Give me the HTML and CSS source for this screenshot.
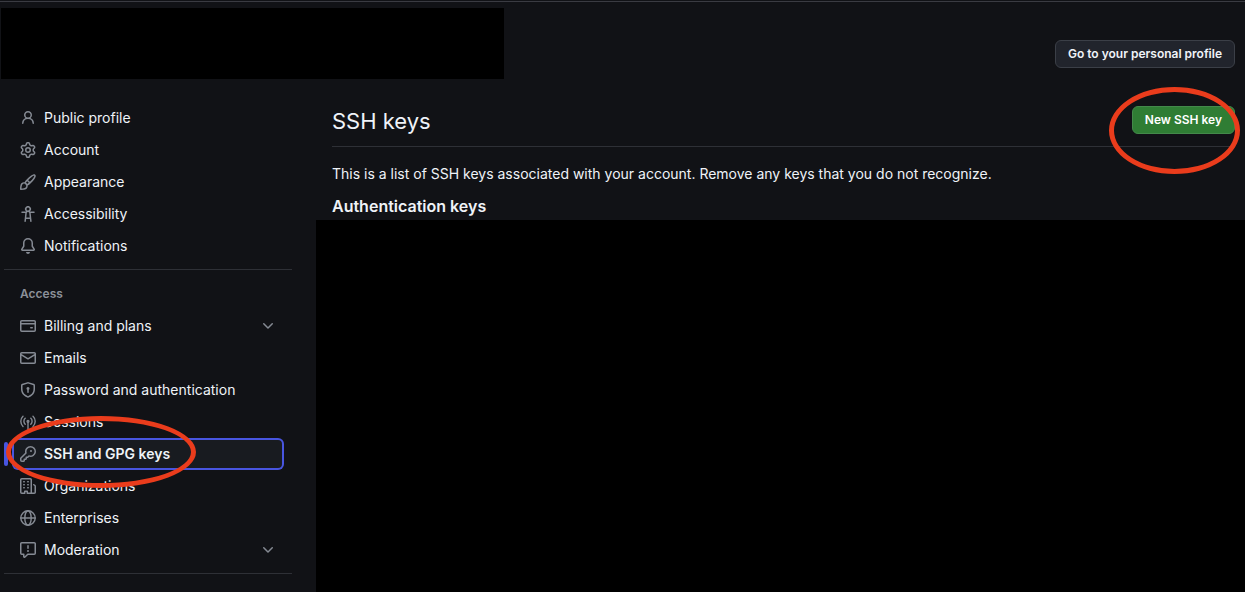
FILE: index.html
```html
<!DOCTYPE html>
<html lang="en">
<head>
  <meta charset="UTF-8" />
  <meta name="viewport" content="width=device-width, initial-scale=1" />
  <title>SSH and GPG keys</title>
  <link rel="stylesheet" href="styles.css">
</head>
<body>

  <header class="profile-header">
    <div class="profile-cover"></div>
    <button type="button" class="btn">Go to your personal profile</button>
  </header>

  <div class="layout">
    <nav class="sidebar" aria-label="Settings">
      <ul class="nav-list">
        <li><a href="#profile"><svg class="icon" viewBox="0 0 16 16"><path d="M10.561 8.073a6.005 6.005 0 0 1 3.432 5.142.75.75 0 1 1-1.498.07 4.5 4.5 0 0 0-8.99 0 .75.75 0 0 1-1.498-.07 6.004 6.004 0 0 1 3.431-5.142 3.999 3.999 0 1 1 5.123 0ZM10.5 5a2.5 2.5 0 1 0-5 0 2.5 2.5 0 0 0 5 0Z"/></svg>Public profile</a></li>
        <li><a href="#account"><svg class="icon" viewBox="0 0 16 16"><path d="M8 0a8.2 8.2 0 0 1 .701.031C9.444.095 9.99.645 10.16 1.29l.288 1.107c.018.066.079.158.212.224.231.114.454.243.668.386.123.082.233.09.299.071l1.103-.303c.644-.176 1.392.021 1.82.63.27.385.506.792.704 1.218.315.675.111 1.422-.364 1.891l-.814.806c-.049.048-.098.147-.088.294.016.257.016.515 0 .772-.01.147.038.246.088.294l.814.806c.475.469.679 1.216.364 1.891a7.977 7.977 0 0 1-.704 1.217c-.428.61-1.176.807-1.82.63l-1.102-.302c-.067-.019-.177-.011-.3.071a5.909 5.909 0 0 1-.668.386c-.133.066-.194.158-.211.224l-.29 1.106c-.168.646-.715 1.196-1.458 1.26a8.006 8.006 0 0 1-1.402 0c-.743-.064-1.289-.614-1.458-1.26l-.289-1.106c-.018-.066-.079-.158-.212-.224a5.738 5.738 0 0 1-.668-.386c-.123-.082-.233-.09-.299-.071l-1.103.303c-.644.176-1.392-.021-1.82-.63a8.12 8.12 0 0 1-.704-1.218c-.315-.675-.111-1.422.363-1.891l.815-.806c.05-.048.098-.147.088-.294a6.214 6.214 0 0 1 0-.772c.01-.147-.038-.246-.088-.294l-.815-.806C.635 6.045.431 5.298.746 4.623a7.92 7.92 0 0 1 .704-1.217c.428-.61 1.176-.807 1.82-.63l1.102.302c.067.019.177.011.3-.071.214-.143.437-.272.668-.386.133-.066.194-.158.211-.224l.29-1.106C6.009.645 6.556.095 7.299.03 7.53.01 7.764 0 8 0Zm-.571 1.525c-.036.003-.108.036-.137.146l-.289 1.105c-.147.561-.549.967-.998 1.189-.173.086-.34.183-.5.29-.417.278-.97.423-1.529.27l-1.103-.303c-.109-.03-.175.016-.195.045-.22.312-.412.644-.573.99-.014.031-.021.11.059.19l.815.806c.411.406.562.957.53 1.456a4.709 4.709 0 0 0 0 .582c.032.499-.119 1.05-.53 1.456l-.815.806c-.081.08-.073.159-.059.19.162.346.353.677.573.989.02.03.085.076.195.046l1.102-.303c.56-.153 1.113-.008 1.53.27.161.107.328.204.501.29.447.222.85.629.997 1.189l.289 1.105c.029.109.101.143.137.146a6.6 6.6 0 0 0 1.142 0c.036-.003.108-.036.137-.146l.289-1.105c.147-.561.549-.967.998-1.189.173-.086.34-.183.5-.29.417-.278.97-.423 1.529-.27l1.103.303c.109.029.175-.016.195-.045.22-.313.411-.644.573-.99.014-.031.021-.11-.059-.19l-.815-.806c-.411-.406-.562-.957-.53-1.456a4.709 4.709 0 0 0 0-.582c-.032-.499.119-1.05.53-1.456l.815-.806c.081-.08.073-.159.059-.19a6.464 6.464 0 0 0-.573-.989c-.02-.03-.085-.076-.195-.046l-1.102.303c-.56.153-1.113.008-1.53-.27a4.44 4.44 0 0 0-.501-.29c-.447-.222-.85-.629-.997-1.189l-.289-1.105c-.029-.11-.101-.143-.137-.146a6.6 6.6 0 0 0-1.142 0ZM11 8a3 3 0 1 1-6 0 3 3 0 0 1 6 0ZM9.5 8a1.5 1.5 0 1 0-3.001.001A1.5 1.5 0 0 0 9.5 8Z"/></svg>Account</a></li>
        <li><a href="#appearance"><svg class="icon" viewBox="0 0 16 16"><path d="M11.134 1.535c.7-.509 1.416-.942 2.076-1.155.649-.21 1.463-.267 2.069.34.603.601.568 1.411.368 2.07-.202.668-.624 1.39-1.125 2.096-1.011 1.424-2.496 2.987-3.775 4.249-1.098 1.084-2.132 1.839-3.04 2.3a3.744 3.744 0 0 1-1.055 3.217c-.431.431-1.065.691-1.657.861-.614.177-1.294.287-1.914.357A21.151 21.151 0 0 1 .797 16H.743a.75.75 0 0 1-.743-.742v-.054a21.25 21.25 0 0 1 .13-2.284c.067-.647.187-1.287.358-1.914.17-.591.43-1.226.86-1.657a3.746 3.746 0 0 1 3.227-1.054c.466-.893 1.225-1.907 2.314-2.982 1.271-1.255 2.833-2.75 4.245-3.777ZM1.62 13.089c-.051.464-.086.929-.104 1.395.466-.018.932-.053 1.396-.104a10.511 10.511 0 0 0 1.668-.309c.526-.151.856-.325 1.011-.48a2.25 2.25 0 1 0-3.182-3.182c-.155.155-.329.485-.48 1.01a10.515 10.515 0 0 0-.309 1.67Zm10.396-10.34c-1.224.89-2.605 2.189-3.822 3.384l1.718 1.718c1.21-1.205 2.51-2.597 3.387-3.833.47-.662.78-1.227.912-1.662.134-.444.032-.551.009-.575h-.001V1.78c-.014-.014-.113-.113-.548.027-.432.14-.995.462-1.655.942Zm-4.832 7.266-.001.001a9.859 9.859 0 0 0 1.63-1.142L7.155 7.216a9.7 9.7 0 0 0-1.161 1.607c.482.302.889.71 1.19 1.192Z"/></svg>Appearance</a></li>
        <li><a href="#accessibility"><svg class="icon" viewBox="0 0 16 16"><path d="M9.923 5.302c.063.063.122.129.178.198H14A.75.75 0 0 1 14 7h-3.3l.578 5.163.362 2.997a.75.75 0 0 1-1.49.18L9.868 13H6.132l-.282 2.34a.75.75 0 0 1-1.49-.18l.362-2.997L5.3 7H2a.75.75 0 0 1 0-1.5h3.9a2.54 2.54 0 0 1 .176-.198 3 3 0 1 1 3.847 0ZM9.2 7.073h-.001a1.206 1.206 0 0 0-2.398 0L6.305 11.5h3.39ZM9.5 3a1.5 1.5 0 1 0-3.001.001A1.5 1.5 0 0 0 9.5 3Z"/></svg>Accessibility</a></li>
        <li><a href="#notifications"><svg class="icon" viewBox="0 0 16 16"><path d="M8 16a2 2 0 0 0 1.985-1.75c.017-.137-.097-.25-.235-.25h-3.5c-.138 0-.252.113-.235.25A2 2 0 0 0 8 16ZM3 5a5 5 0 0 1 10 0v2.947c0 .05.015.098.042.139l1.703 2.555A1.519 1.519 0 0 1 13.482 13H2.518a1.516 1.516 0 0 1-1.263-2.36l1.703-2.554A.255.255 0 0 0 3 7.947Zm5-3.5A3.5 3.5 0 0 0 4.5 5v2.947c0 .346-.102.683-.294.97l-1.703 2.556a.017.017 0 0 0-.003.01l.001.006c0 .002.002.004.004.006l.006.004.007.001h10.964l.007-.001.006-.004.004-.006.001-.007a.017.017 0 0 0-.003-.01l-1.703-2.554a1.745 1.745 0 0 1-.294-.97V5A3.5 3.5 0 0 0 8 1.5Z"/></svg>Notifications</a></li>
      </ul>

      <h2 class="nav-heading">Access</h2>
      <ul class="nav-list">
        <li><a href="#billing"><svg class="icon" viewBox="0 0 16 16"><path d="M10.75 9a.75.75 0 0 0 0 1.5h1.5a.75.75 0 0 0 0-1.5h-1.5Z"/><path d="M0 3.75C0 2.784.784 2 1.75 2h12.5c.966 0 1.75.784 1.75 1.75v8.5A1.75 1.75 0 0 1 14.25 14H1.75A1.75 1.75 0 0 1 0 12.25ZM14.5 6.5h-13v5.75c0 .138.112.25.25.25h12.5a.25.25 0 0 0 .25-.25Zm0-2.75a.25.25 0 0 0-.25-.25H1.75a.25.25 0 0 0-.25.25V5h13Z"/></svg>Billing and plans<svg class="icon chevron" viewBox="0 0 16 16"><path d="M12.78 5.22a.749.749 0 0 1 0 1.06l-4.25 4.25a.749.749 0 0 1-1.06 0L3.22 6.28a.749.749 0 1 1 1.06-1.06L8 8.939l3.72-3.719a.749.749 0 0 1 1.06 0Z"/></svg></a></li>
        <li><a href="#emails"><svg class="icon" viewBox="0 0 16 16"><path d="M1.75 2h12.5c.966 0 1.75.784 1.75 1.75v8.5A1.75 1.75 0 0 1 14.25 14H1.75A1.75 1.75 0 0 1 0 12.25v-8.5C0 2.784.784 2 1.75 2ZM1.5 12.251c0 .138.112.25.25.25h12.5a.25.25 0 0 0 .25-.25V5.809L8.38 9.397a.75.75 0 0 1-.76 0L1.5 5.809v6.442Zm13-8.181v-.32a.25.25 0 0 0-.25-.25H1.75a.25.25 0 0 0-.25.25v.32L8 7.88Z"/></svg>Emails</a></li>
        <li><a href="#password"><svg class="icon" viewBox="0 0 16 16"><path d="m8.533.133 5.25 1.68A1.75 1.75 0 0 1 15 3.48V7c0 1.566-.32 3.182-1.303 4.682-.983 1.498-2.585 2.813-5.032 3.855a1.697 1.697 0 0 1-1.33 0c-2.447-1.042-4.049-2.357-5.032-3.855C1.32 10.182 1 8.566 1 7V3.48a1.75 1.75 0 0 1 1.217-1.667l5.25-1.68a1.748 1.748 0 0 1 1.066 0Zm-.61 1.429.001.001-5.25 1.68a.251.251 0 0 0-.174.237V7c0 1.36.275 2.666 1.057 3.859.784 1.194 2.121 2.342 4.366 3.298a.196.196 0 0 0 .154 0c2.245-.957 3.582-2.103 4.366-3.297C13.225 9.666 13.5 8.358 13.5 7V3.48a.25.25 0 0 0-.174-.238l-5.25-1.68a.25.25 0 0 0-.153 0ZM9.5 6.5c0 .536-.286 1.032-.75 1.3v2.45a.75.75 0 0 1-1.5 0V7.8A1.5 1.5 0 1 1 9.5 6.5Z"/></svg>Password and authentication</a></li>
        <li><a href="#sessions"><svg class="icon icon-line" viewBox="0 0 16 16"><path d="M3 2.2a7 7 0 0 0-2.2 5.1A7 7 0 0 0 3 12.4M13 2.2a7 7 0 0 1 2.2 5.1 7 7 0 0 1-2.2 5.1M5.2 4.3a4 4 0 0 0-1.3 3 4 4 0 0 0 1.3 3M10.8 4.3a4 4 0 0 1 1.3 3 4 4 0 0 1-1.3 3M8 8v7.2"/><circle cx="8" cy="7.3" r=".9"/></svg>Sessions</a></li>
        <li class="active">
          <a href="#keys" aria-current="page"><svg class="icon" viewBox="0 0 16 16"><path d="M10.5 0a5.499 5.499 0 1 1-1.288 10.848l-.932.932a.749.749 0 0 1-.53.22H7v.75a.749.749 0 0 1-.22.53l-.5.5a.749.749 0 0 1-.53.22H5v.75a.749.749 0 0 1-.22.53l-.5.5a.749.749 0 0 1-.53.22h-2A1.75 1.75 0 0 1 0 14.25v-2c0-.199.079-.389.22-.53l4.932-4.932A5.5 5.5 0 0 1 10.5 0Zm-4 5.5c-.001.431.069.86.205 1.269a.75.75 0 0 1-.181.768L1.5 12.56v1.69c0 .138.112.25.25.25h1.69l.06-.06v-1.19a.75.75 0 0 1 .75-.75h1.19l.06-.06v-1.19a.75.75 0 0 1 .75-.75h1.19l1.023-1.025a.75.75 0 0 1 .768-.18A4 4 0 1 0 6.5 5.5ZM11 6a1 1 0 1 1 0-2 1 1 0 0 1 0 2Z"/></svg>SSH and GPG keys</a>
          <span class="ring ring-nav"></span>
        </li>
        <li><a href="#organizations"><svg class="icon" viewBox="0 0 16 16"><path d="M1.75 16A1.75 1.75 0 0 1 0 14.25V1.75C0 .784.784 0 1.75 0h8.5C11.216 0 12 .784 12 1.75v12.5c0 .085-.006.168-.018.25h2.268a.25.25 0 0 0 .25-.25V8.285a.25.25 0 0 0-.111-.208l-1.055-.703a.749.749 0 1 1 .832-1.248l1.055.703c.487.325.779.871.779 1.456v5.965A1.75 1.75 0 0 1 14.25 16h-3.5a.766.766 0 0 1-.197-.026c-.099.017-.2.026-.303.026h-3a.75.75 0 0 1-.75-.75V14h-1v1.25a.75.75 0 0 1-.75.75Zm-.25-1.75c0 .138.112.25.25.25H4v-1.25a.75.75 0 0 1 .75-.75h2.5a.75.75 0 0 1 .75.75v1.25h2.25a.25.25 0 0 0 .25-.25V1.75a.25.25 0 0 0-.25-.25h-8.5a.25.25 0 0 0-.25.25ZM3.75 6h.5a.75.75 0 0 1 0 1.5h-.5a.75.75 0 0 1 0-1.5ZM3 3.75A.75.75 0 0 1 3.75 3h.5a.75.75 0 0 1 0 1.5h-.5A.75.75 0 0 1 3 3.75Zm4 3A.75.75 0 0 1 7.75 6h.5a.75.75 0 0 1 0 1.5h-.5A.75.75 0 0 1 7 6.75ZM7.75 3h.5a.75.75 0 0 1 0 1.5h-.5a.75.75 0 0 1 0-1.5ZM3 9.75A.75.75 0 0 1 3.75 9h.5a.75.75 0 0 1 0 1.5h-.5A.75.75 0 0 1 3 9.75ZM7.75 9h.5a.75.75 0 0 1 0 1.5h-.5a.75.75 0 0 1 0-1.5Z"/></svg>Organizations</a></li>
        <li><a href="#enterprises"><svg class="icon icon-line" viewBox="0 0 16 16"><circle cx="8" cy="8" r="7.2"/><ellipse cx="8" cy="8" rx="3.2" ry="7.2"/><path d="M.8 8h14.4"/></svg>Enterprises</a></li>
        <li><a href="#moderation"><svg class="icon" viewBox="0 0 16 16"><path d="M0 1.75C0 .784.784 0 1.75 0h12.5C15.216 0 16 .784 16 1.75v9.5A1.75 1.75 0 0 1 14.25 13H8.06l-2.573 2.573A1.458 1.458 0 0 1 3 14.543V13H1.75A1.75 1.75 0 0 1 0 11.25Zm1.75-.25a.25.25 0 0 0-.25.25v9.5c0 .138.112.25.25.25h2a.75.75 0 0 1 .75.75v2.19l2.72-2.72a.749.749 0 0 1 .53-.22h6.5a.25.25 0 0 0 .25-.25v-9.5a.25.25 0 0 0-.25-.25Zm7 2.25v2.5a.75.75 0 0 1-1.5 0v-2.5a.75.75 0 0 1 1.5 0ZM9 9a1 1 0 1 1-2 0 1 1 0 0 1 2 0Z"/></svg>Moderation<svg class="icon chevron" viewBox="0 0 16 16"><path d="M12.78 5.22a.749.749 0 0 1 0 1.06l-4.25 4.25a.749.749 0 0 1-1.06 0L3.22 6.28a.749.749 0 1 1 1.06-1.06L8 8.939l3.72-3.719a.749.749 0 0 1 1.06 0Z"/></svg></a></li>
      </ul>
    </nav>

    <main class="content">
      <div class="title-row">
        <h1>SSH keys</h1>
        <div class="new-key">
          <button type="button" class="btn btn-primary">New SSH key</button>
          <span class="ring ring-button"></span>
        </div>
      </div>
      <p>This is a list of SSH keys associated with your account. Remove any keys that you do not recognize.</p>
      <h2>Authentication keys</h2>
      <div class="key-list"></div>
    </main>
  </div>

</body>
</html>
```
FILE: styles.css
```css
* {
  box-sizing: border-box;
}
body {
  margin: 0;
  min-height: 100vh;
  display: flex;
  flex-direction: column;
  background: #111216;
  color: #eff3f8;
  font-family: Inter, "Liberation Sans", sans-serif;
  font-size: 14px;
  line-height: 20px;
}
h1, h2, p, ul {
  margin: 0;
  padding: 0;
}

/* header */
.profile-header {
  display: flex;
  justify-content: space-between;
  align-items: center;
  margin-top: 1px;
  padding: 6px 10px 0 1px;
  border-top: 1px solid #3a3b42;
}
.profile-cover {
  width: 503px;
  height: 71px;
  background: #000;
}
.btn {
  height: 28px;
  padding: 0 12px;
  border: 1px solid #3b3f47;
  border-radius: 6px;
  background: #21242c;
  color: #eff3f8;
  font: 600 12px/20px Inter, "Liberation Sans", sans-serif;
  white-space: nowrap;
}
.profile-header .btn {
  margin-top: 20px;
}
.btn-primary {
  display: block;
  background: #2f7d34;
  border-color: #43894a;
  color: #fff;
}

.layout {
  flex: 1;
  display: flex;
  gap: 24px;
}

/* sidebar */
.sidebar {
  flex: 0 0 288px;
  margin-left: 4px;
  padding-top: 23px;
}
.nav-list {
  list-style: none;
  padding: 0 8px 7px;
  border-bottom: 1px solid #2e3036;
}
.nav-list li {
  position: relative;
}
.nav-list a {
  display: flex;
  align-items: center;
  gap: 8px;
  height: 32px;
  padding: 0 8px;
  border-radius: 6px;
  color: inherit;
  text-decoration: none;
}
.nav-heading {
  padding: 14px 16px 6px;
  color: #8b9099;
  font-size: 12px;
  font-weight: 600;
}
.icon {
  flex: none;
  width: 16px;
  height: 16px;
  fill: #858a93;
}
.icon-line {
  fill: none;
  stroke: #858a93;
  stroke-width: 1.4;
  stroke-linecap: round;
}
.chevron {
  margin-left: auto;
}
.active a {
  background: #181b20;
  box-shadow: inset 0 0 0 2px #4855e0;
  font-weight: 600;
}
.active::before {
  content: "";
  position: absolute;
  left: -8px;
  top: 4px;
  width: 4px;
  height: 24px;
  border-radius: 6px;
  background: #4855e0;
}

/* content */
.content {
  flex: 1;
  display: flex;
  flex-direction: column;
  padding: 27px 0 0 16px;
}
.title-row {
  display: flex;
  justify-content: space-between;
  align-items: flex-start;
  height: 41px;
  margin-right: 10px;
  border-bottom: 1px solid #2e3036;
}
h1 {
  font-size: 22px;
  font-weight: 400;
  line-height: 30px;
}
.content p {
  margin-top: 17px;
}
.content h2 {
  margin-top: 10px;
  font-size: 16px;
  font-weight: 600;
  line-height: 24px;
}
.key-list {
  flex: 1;
  margin: 2px 0 0 -16px;
  background: #000;
}

/* red highlight rings */
.new-key {
  position: relative;
}
.ring {
  position: absolute;
  z-index: 1;
  border: 5px solid #ea3c1c;
  border-radius: 50%;
  pointer-events: none;
}
.ring-nav {
  left: -6px;
  top: -22px;
  width: 190px;
  height: 72px;
}
.ring-button {
  right: -5px;
  top: -19px;
  width: 131px;
  height: 87px;
}
```
